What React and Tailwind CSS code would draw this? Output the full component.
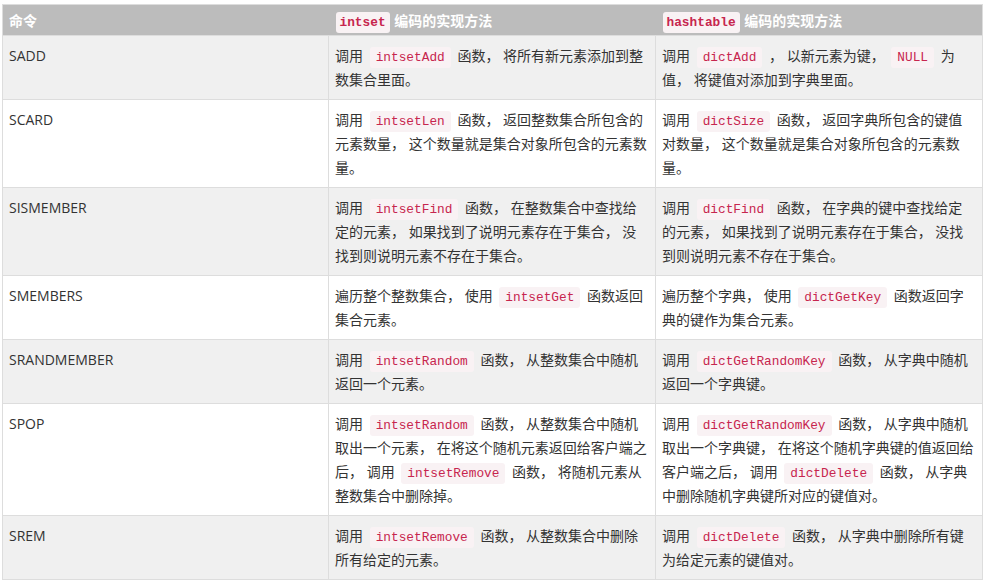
import React from 'react';

// Table of set-command implementations for the two encodings
const Code = ({ children, head = false }) => (
    <code
        className={`font-['Liberation_Mono',monospace] text-[12.8px] leading-4 text-[#c7254e] bg-[#f9f2f4] rounded-[3px] py-[3px] ${head ? 'font-bold px-1 mx-[1px]' : 'px-[6px] mx-[3px]'}`}
    >
        {children}
    </code>
);

const rows = [
    {
        cmd: 'SADD',
        a: <>调用 <Code>intsetAdd</Code> 函数， 将所有新元素添加到整数集合里面。</>,
        b: <>调用 <Code>dictAdd</Code> ， 以新元素为键， <Code>NULL</Code> 为值， 将键值对添加到字典里面。</>
    },
    {
        cmd: 'SCARD',
        a: <>调用 <Code>intsetLen</Code> 函数， 返回整数集合所包含的元素数量， 这个数量就是集合对象所包含的元素数量。</>,
        b: <>调用 <Code>dictSize</Code> 函数， 返回字典所包含的键值对数量， 这个数量就是集合对象所包含的元素数量。</>
    },
    {
        cmd: 'SISMEMBER',
        a: <>调用 <Code>intsetFind</Code> 函数， 在整数集合中查找给定的元素， 如果找到了说明元素存在于集合， 没找到则说明元素不存在于集合。</>,
        b: <>调用 <Code>dictFind</Code> 函数， 在字典的键中查找给定的元素， 如果找到了说明元素存在于集合， 没找到则说明元素不存在于集合。</>
    },
    {
        cmd: 'SMEMBERS',
        a: <>遍历整个整数集合， 使用 <Code>intsetGet</Code> 函数返回集合元素。</>,
        b: <>遍历整个字典， 使用 <Code>dictGetKey</Code> 函数返回字典的键作为集合元素。</>
    },
    {
        cmd: 'SRANDMEMBER',
        a: <>调用 <Code>intsetRandom</Code> 函数， 从整数集合中随机返回一个元素。</>,
        b: <>调用 <Code>dictGetRandomKey</Code> 函数， 从字典中随机返回一个字典键。</>
    },
    {
        cmd: 'SPOP',
        a: <>调用 <Code>intsetRandom</Code> 函数， 从整数集合中随机取出一个元素， 在将这个随机元素返回给客户端之后， 调用 <Code>intsetRemove</Code> 函数， 将随机元素从整数集合中删除掉。</>,
        b: <>调用 <Code>dictGetRandomKey</Code> 函数， 从字典中随机取出一个字典键， 在将这个随机字典键的值返回给客户端之后， 调用 <Code>dictDelete</Code> 函数， 从字典中删除随机字典键所对应的键值对。</>
    },
    {
        cmd: 'SREM',
        a: <>调用 <Code>intsetRemove</Code> 函数， 从整数集合中删除所有给定的元素。</>,
        b: <>调用 <Code>dictDelete</Code> 函数， 从字典中删除所有键为给定元素的键值对。</>
    }
];

const cell = 'border border-[#dddddd] align-top px-[6px] pt-2 pb-[7px] leading-6';
const head = 'text-left px-[6px] pt-1 pb-[2px] leading-6 font-bold';

export default function App() {
    return (
        <div className="bg-white w-[986px] h-[582px] pt-1 pl-[2px] font-['Open_Sans','Noto_Sans_CJK_SC',sans-serif] text-[14px] text-[#333333] [text-spacing-trim:space-all]">
            <table className="w-[980px] border-collapse table-fixed border border-[#dddddd]">
                <colgroup>
                    <col className="w-[326px]" />
                    <col className="w-[327px]" />
                    <col className="w-[327px]" />
                </colgroup>
                <thead>
                    <tr className="bg-[#bcbcbc] text-white">
                        <th className={head}>命令</th>
                        <th className={head}>
                            <Code head>intset</Code> 编码的实现方法
                        </th>
                        <th className={head}>
                            <Code head>hashtable</Code> 编码的实现方法
                        </th>
                    </tr>
                </thead>
                <tbody>
                    {rows.map((row, i) => (
                        <tr key={row.cmd} className={i % 2 === 0 ? 'bg-[#f0f0f0]' : 'bg-white'}>
                            <td className={cell}>{row.cmd}</td>
                            <td className={cell}>{row.a}</td>
                            <td className={cell}>{row.b}</td>
                        </tr>
                    ))}
                </tbody>
            </table>
        </div>
    );
}
